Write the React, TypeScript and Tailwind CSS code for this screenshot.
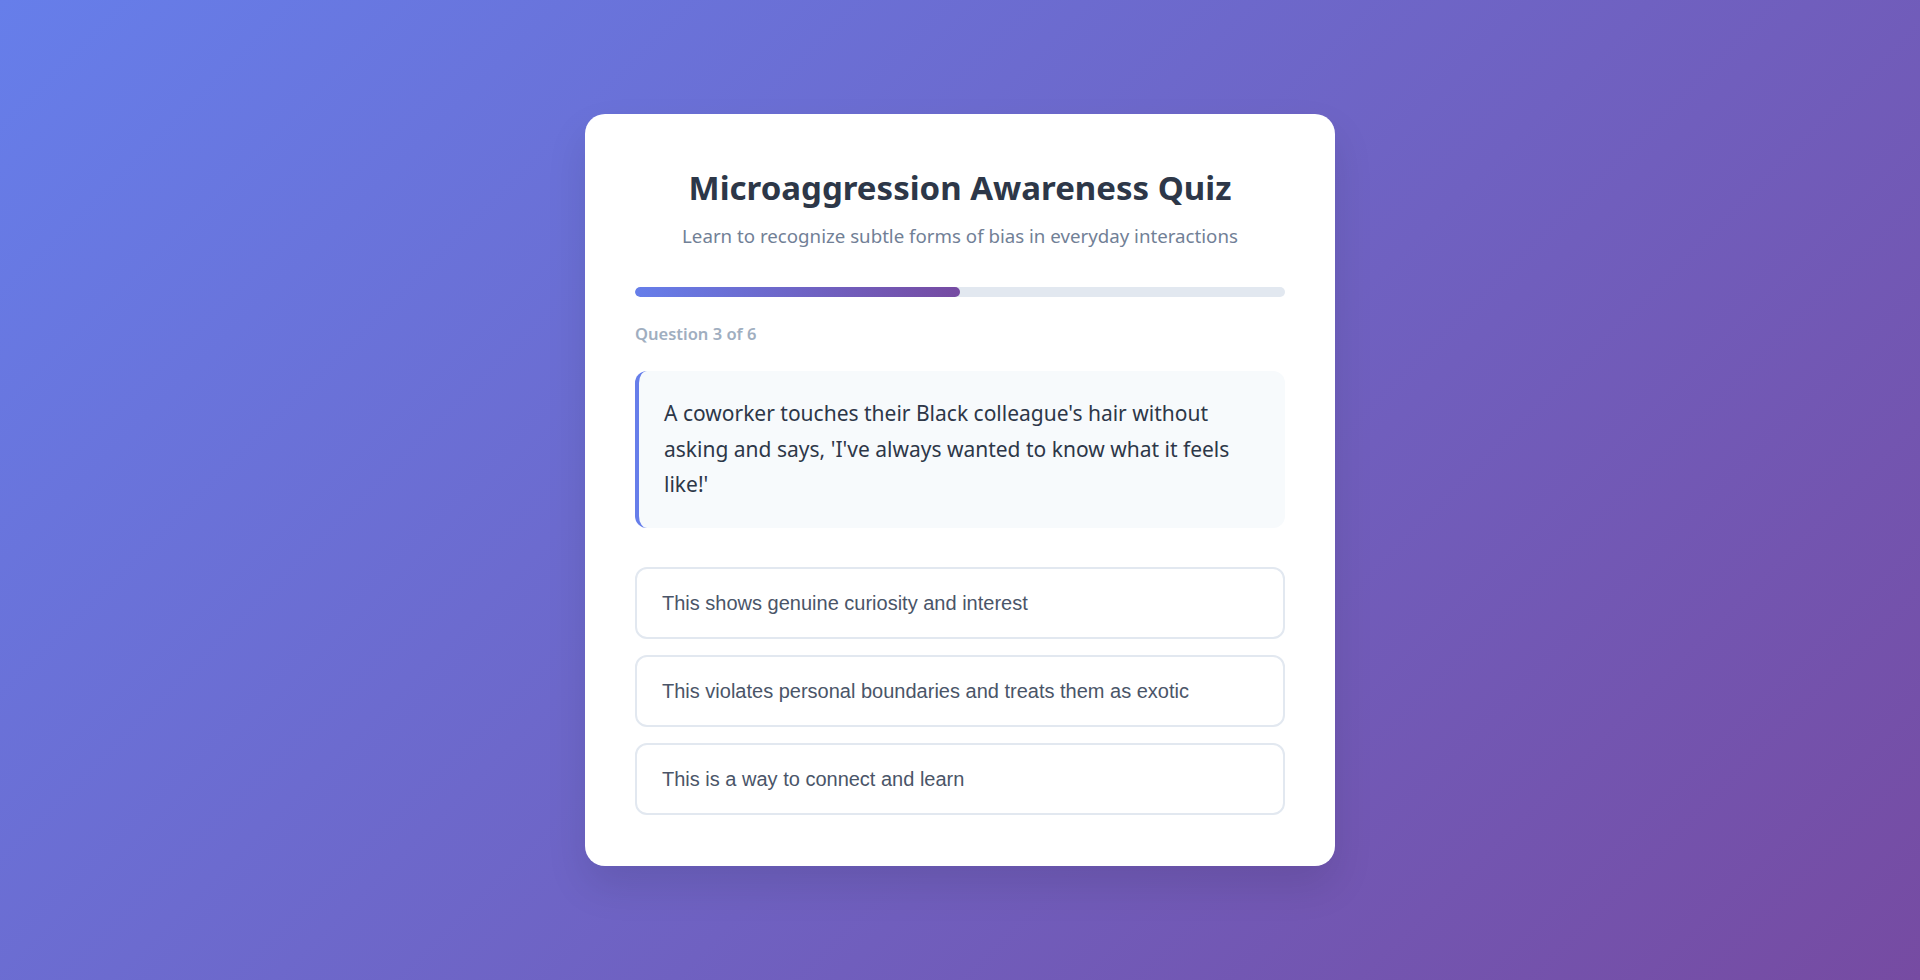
import React from "react";

const options = [
  "This shows genuine curiosity and interest",
  "This violates personal boundaries and treats them as exotic",
  "This is a way to connect and learn",
];

export default function App() {
  return (
    <div className="min-h-screen w-full flex items-center justify-center bg-[linear-gradient(135deg,#667eea_0%,#764ba2_100%)] font-['Noto_Sans',sans-serif]">
      <div className="w-[750px] bg-white rounded-[20px] px-[50px] pt-[50px] pb-[51px] shadow-[0_20px_40px_rgba(0,0,0,0.1)]">
        <h1 className="text-center text-[33px] leading-[48px] font-bold text-[#2d3748]">
          Microaggression Awareness Quiz
        </h1>
        <p className="mt-[11px] text-center text-[18.7px] leading-[26px] text-[#718096]">
          Learn to recognize subtle forms of bias in everyday interactions
        </p>
        <div className="mt-[38px] h-[10px] w-full rounded-full bg-[#e2e8f0] overflow-hidden">
          <div
            className="h-full rounded-full bg-[linear-gradient(90deg,#667eea,#764ba2)]"
            style={{ width: "50%" }}
          />
        </div>
        <div className="mt-[25px] text-[16.5px] leading-[24px] font-semibold text-[#a0aec0]">
          Question 3 of 6
        </div>
        <div className="mt-[25px] bg-[#f7fafc] border-l-4 border-[#667eea] rounded-[12px] py-[25px] pl-[25px] pr-[25px] text-[21px] leading-[35.6px] text-[#2d3748]">
          A coworker touches their Black colleague's hair without asking and says, 'I've always wanted to know what it feels like!'
        </div>
        <div className="mt-[39px] flex flex-col gap-[16px]">
          {options.map((o) => (
            <button
              key={o}
              className="w-full text-left border-2 border-[#e2e8f0] rounded-[12px] bg-white px-[25px] py-[20px] text-[20px] leading-[28px] text-[#4a5568] font-['Liberation_Sans',Arial,sans-serif]"
            >
              {o}
            </button>
          ))}
        </div>
      </div>
    </div>
  );
}
